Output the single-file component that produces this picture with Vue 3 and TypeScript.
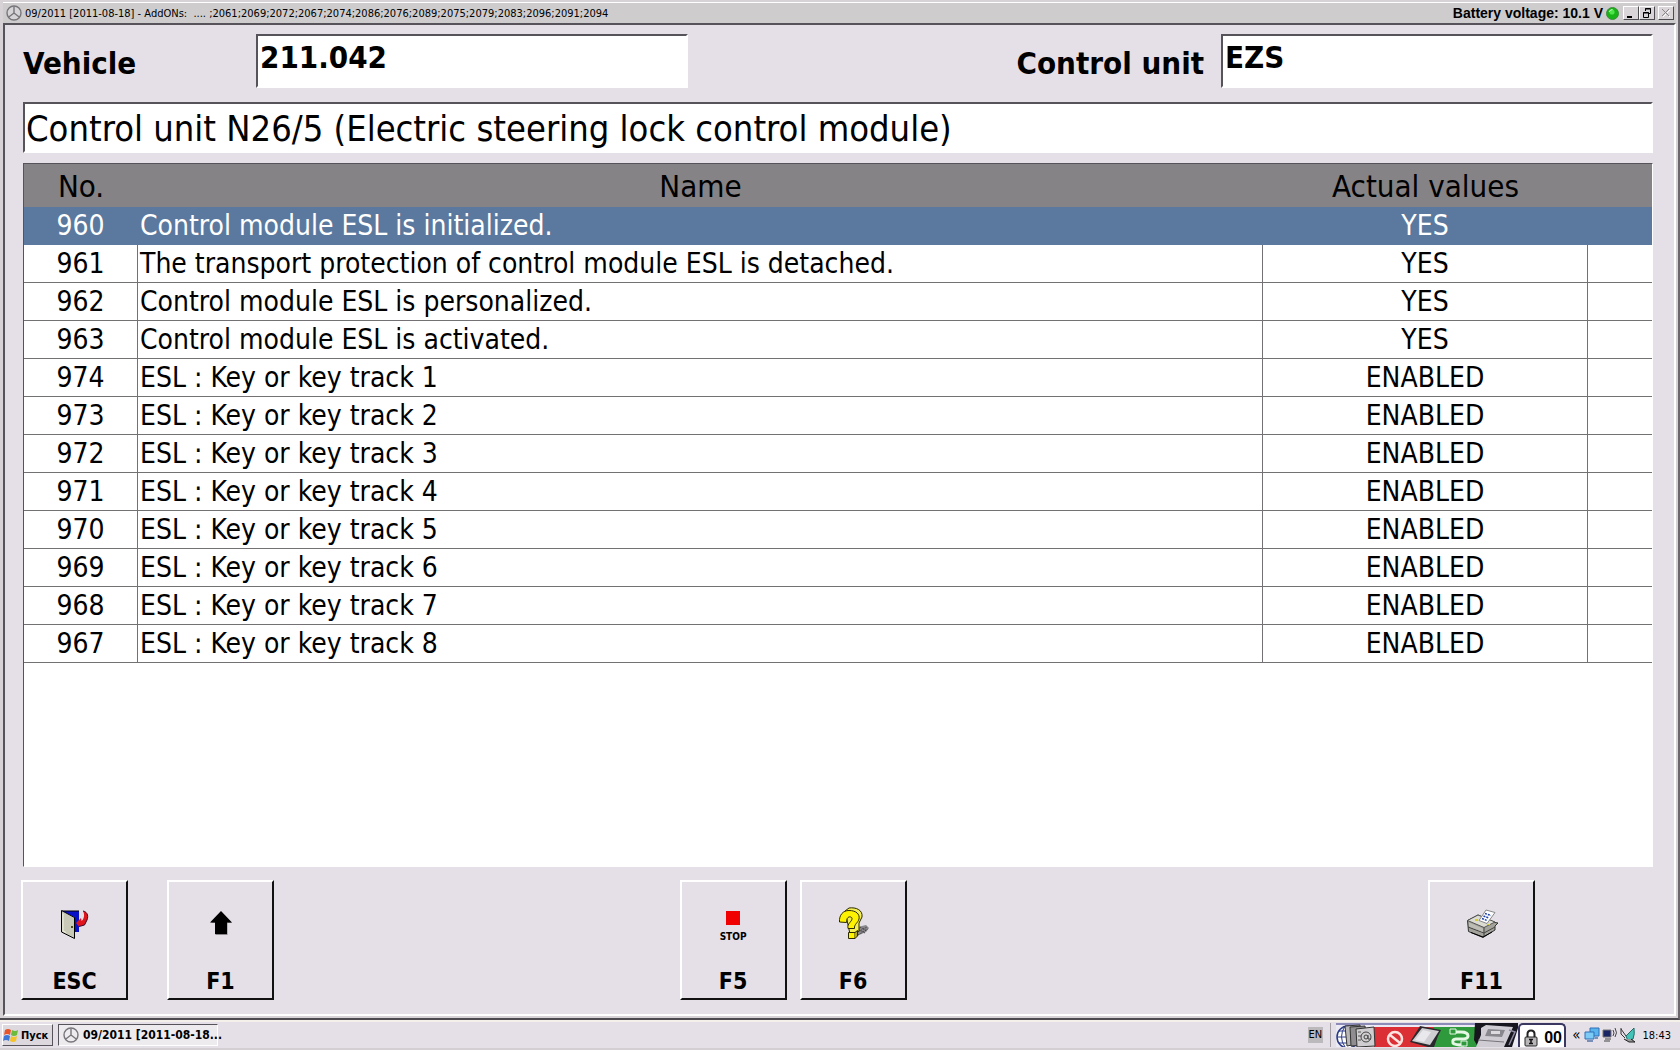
<script setup lang="ts">
import { ref } from 'vue'

interface Measurement {
  no: number
  name: string
  value: string
}

const vehicle = ref('211.042')
const controlUnit = ref('EZS')
const selected = ref(960)

const rows: Measurement[] = [
  { no: 960, name: 'Control module ESL is initialized.', value: 'YES' },
  { no: 961, name: 'The transport protection of control module ESL is detached.', value: 'YES' },
  { no: 962, name: 'Control module ESL is personalized.', value: 'YES' },
  { no: 963, name: 'Control module ESL is activated.', value: 'YES' },
  { no: 974, name: 'ESL : Key or key track 1', value: 'ENABLED' },
  { no: 973, name: 'ESL : Key or key track 2', value: 'ENABLED' },
  { no: 972, name: 'ESL : Key or key track 3', value: 'ENABLED' },
  { no: 971, name: 'ESL : Key or key track 4', value: 'ENABLED' },
  { no: 970, name: 'ESL : Key or key track 5', value: 'ENABLED' },
  { no: 969, name: 'ESL : Key or key track 6', value: 'ENABLED' },
  { no: 968, name: 'ESL : Key or key track 7', value: 'ENABLED' },
  { no: 967, name: 'ESL : Key or key track 8', value: 'ENABLED' },
]
</script>

<template>
  <div class="screen">
    <div class="window">
      <header class="titlebar">
        <svg class="star" viewBox="0 0 16 16" aria-hidden="true">
          <circle cx="8" cy="8" r="7" fill="#d6d4d6" stroke="#77757a" stroke-width="1.4" />
          <path d="M8 1.5 V8 L2.8 12 M8 8 L13.2 12" fill="none" stroke="#77757a" stroke-width="1.4" />
        </svg>
        <span class="caption">09/2011 [2011-08-18] - AddONs:&nbsp; .... ;2061;2069;2072;2067;2074;2086;2076;2089;2075;2079;2083;2096;2091;2094</span>
        <span class="battery">Battery voltage: 10.1 V</span>
        <svg class="led" viewBox="0 0 13 13" aria-hidden="true">
          <circle cx="6.5" cy="6.5" r="6" fill="#17b317" stroke="#3f8a3f" />
          <circle cx="6" cy="5" r="2.6" fill="#4fe34a" />
          <path d="M3 5 Q4 2.5 6.5 2.5" fill="none" stroke="#d5ffd0" />
        </svg>
        <div class="controls">
          <button type="button" aria-label="Minimize">
            <svg viewBox="0 0 12 12"><path d="M2 9 H7 V11 H2Z" fill="#000" /></svg>
          </button>
          <button type="button" aria-label="Restore">
            <svg viewBox="0 0 12 12">
              <path d="M4.5 4 V1.5 H9.5 V6.5 H7.5 M4 2 H10 M2.5 5.5 H7.5 V10.5 H2.5Z M2 6 H8" fill="none" stroke="#000" />
            </svg>
          </button>
          <button type="button" class="close" aria-label="Close" disabled>
            <svg viewBox="0 0 12 12">
              <path d="M3 3 L10 10 M10 3 L3 10" stroke="#fff" />
              <path d="M2 2 L9 9 M9 2 L2 9" stroke="#8a878b" />
            </svg>
          </button>
        </div>
      </header>

      <main class="panel">
        <div class="fields">
          <label class="vehicle-label" for="vehicle">Vehicle</label>
          <input id="vehicle" v-model="vehicle" type="text" readonly />
          <label class="unit-label" for="unit">Control unit</label>
          <input id="unit" v-model="controlUnit" type="text" readonly />
        </div>

        <h1>Control unit N26/5 (Electric steering lock control module)</h1>

        <div class="list">
          <table>
            <colgroup>
              <col class="c-no" />
              <col />
              <col class="c-value" />
              <col class="c-end" />
            </colgroup>
            <thead>
              <tr>
                <th scope="col">No.</th>
                <th scope="col">Name</th>
                <th scope="col">Actual values</th>
                <td></td>
              </tr>
            </thead>
            <tbody>
              <tr
                v-for="row in rows"
                :key="row.no"
                :class="{ selected: row.no === selected }"
                @click="selected = row.no"
              >
                <td>{{ row.no }}</td>
                <td class="name">{{ row.name }}</td>
                <td>{{ row.value }}</td>
                <td></td>
              </tr>
            </tbody>
          </table>
        </div>

        <nav class="keys">
          <button type="button" class="key">
            <svg viewBox="0 0 36 36" aria-hidden="true">
              <path d="M5 6 H22 V27 H17 V12 L5 6Z" fill="#0a12c8" />
              <path d="M5 6 H22" stroke="#000" />
              <path d="M4.5 5.5 V27 L17.500 33.500 V12.500 Z" fill="#c9c9b8" stroke="#000" />
              <path d="M6 8.500 V26 L9 27.500" fill="none" stroke="#f4f4e8" />
              <path d="M14 21 h2 v2 h-2z" fill="#4a4a10" />
              <path d="M26 6 C31 7 32 12 29 17 L27.500 20 L22 21.500 L19 18 L24 13 L24.500 16 C27 14 28 10 26 6Z" fill="#e0141c" />
              <path d="M26 6 C31 7 32 12 29 17 L27.500 20 L22 21.500" fill="none" stroke="#3a0a2a" />
            </svg>
            <span>ESC</span>
          </button>
          <button type="button" class="key f1">
            <svg viewBox="0 0 36 36" aria-hidden="true">
              <path d="M18.500 7 L29 18 H24.500 V30 H12.500 V18 H8 Z" fill="#8a878b" />
              <path d="M18 6 L29 17.500 H24 V29 H12 V17.500 H7 Z" fill="#000" />
            </svg>
            <span>F1</span>
          </button>
          <span class="gap-left"></span>
          <button type="button" class="key">
            <span class="stop"><i></i><small>STOP</small></span>
            <span>F5</span>
          </button>
          <button type="button" class="key f6">
            <svg viewBox="0 0 36 36" aria-hidden="true">
              <path d="M18 28 L23 22 L31 20 L34 23 L31 27 L22 31Z" fill="#8b888d" />
              <path d="M21 28 L32 22 M23 30 L33 24 M22 24 L30 28 M25 22 L32 26" stroke="#38363a" stroke-dasharray="1 1" />
              <path d="M10 6 L14 3 C21 2 28 5 27 12 L24 18 V26 L20 29 H15 Z" fill="#f4ee56" stroke="#2a2800" />
              <path d="M4.500 17 C4 10 8 5.500 14 5.500 C21 5.500 25 9 24 14 C23 18 19 19 19.500 23.500 H13 C12 18 17 17 17 13.500 C17 11.500 13 11 12 14 L11.500 17.500 Z" fill="#fff200" stroke="#2a2800" />
              <path d="M13.500 27.500 H20 V33.500 H13.500Z" fill="#fff200" stroke="#2a2800" />
              <path d="M20 27.500 L22.500 25.500 V31 L20 33.500" fill="#b3aa20" stroke="#2a2800" />
            </svg>
            <span>F6</span>
          </button>
          <span class="gap-right"></span>
          <button type="button" class="key">
            <svg viewBox="0 0 36 36" aria-hidden="true">
              <path d="M3.500 15.500 L14 10 L31 17.500 L34 18 L31 21 V25 L19 32.500 L4.500 26.500 Z" fill="#a3a39b" stroke="#333" />
              <path d="M3.500 15.500 L14 10 L31 17 L20 22.500Z" fill="#dddcd3" stroke="#555" />
              <path d="M20 22.500 V31 M4 22 L20 28 L31 22" fill="none" stroke="#444" />
              <path d="M5 17.500 L19 23.500 V27 L5 21.500Z" fill="#bebdb5" />
              <path d="M15 15.500 L22 5 L31 7.500 L23 18.500Z" fill="#fff" stroke="#888" />
              <path d="M21 8.500 L27 10.500 M19.500 11 L25 13 M18 13.500 L23 15.500" stroke="#1c3fa8" stroke-width="1.500" stroke-dasharray="2 1" />
              <path d="M11 14 h3 v2 h-3z M23 19 h3 v1 h-3z" fill="#d9cf2a" />
              <path d="M7 27.500 L19 32 L28 27" fill="none" stroke="#000" />
            </svg>
            <span>F11</span>
          </button>
        </nav>
      </main>
    </div>

    <footer class="taskbar">
      <button type="button" class="start">
        <svg viewBox="0 0 16 16" aria-hidden="true">
          <path d="M2 3 Q5 1 8 3 L7 8 Q4 6 1 8Z" fill="#e8552a" />
          <path d="M9 3 Q12 5 15 3 L14 8 Q11 10 8 8Z" fill="#6dbb3a" />
          <path d="M1 9 Q4 7 7 9 L6 14 Q3 12 0 14Z" fill="#3f77d8" />
          <path d="M8 9 Q11 11 14 9 L13 14 Q10 16 7 14Z" fill="#f5c227" />
        </svg>
        <span>Пуск</span>
      </button>
      <button type="button" class="task">
        <svg viewBox="0 0 16 16" aria-hidden="true">
          <circle cx="8" cy="8" r="7" fill="#eeecee" stroke="#77757a" stroke-width="1.400" />
          <path d="M8 1.500 V8 L2.800 12 M8 8 L13.200 12" fill="none" stroke="#77757a" stroke-width="1.400" />
        </svg>
        <span>09/2011 [2011-08-18...</span>
      </button>
      <span class="lang">EN</span>
      <div class="strip">
        <svg viewBox="0 0 182 24" aria-hidden="true">
          <rect width="182" height="24" fill="#eceaf2" />
          <path d="M0 0 H182 V2 H0Z" fill="#8d8bb8" />
          <rect x="38" y="4" width="62" height="20" fill="#dc2f35" />
          <rect x="98" y="4" width="46" height="20" fill="#2f9a3c" />
          <circle cx="12" cy="14" r="11" fill="#fff" stroke="#2b3a86" stroke-width="1.500" />
          <path d="M1 14 H12 M3 8 H12 M3 20 H12 M9 3 Q2 14 9 24" fill="none" stroke="#2b3a86" />
          <g stroke="#333" fill="#b9b7b8">
            <path d="M9 3 L24 2 L26 20 L11 23Z" />
            <path d="M14 4 L29 3 L31 22 L15 23Z" fill="#8f8d8f" />
            <path d="M20 6 L38 4 L39 23 L21 24Z" fill="#cfcdcf" />
          </g>
          <path d="M22 9 h3 M22 13 h3 M22 17 h3" stroke="#555" />
          <circle cx="30" cy="14" r="5" fill="none" stroke="#444" />
          <circle cx="30" cy="14" r="2" fill="none" stroke="#444" />
          <path d="M32 12 V16 H35" fill="none" stroke="#444" />
          <circle cx="59" cy="16" r="7" fill="none" stroke="#ffe3e0" stroke-width="2.500" />
          <path d="M54 12 L64 20" stroke="#ffe3e0" stroke-width="2.500" />
          <path d="M74 19 L84 3 L105 7 L102 13 L98 24 H92Z" fill="#2a282c" />
          <path d="M76 18 L86 5 L103 8 L94 22Z" fill="#cfced2" />
          <path d="M79 17 L87 7 L95 9 L88 19Z" fill="#e9e8ec" />
          <path d="M115 9 H125 Q132 9 132 13 Q132 16 125 16 H120 Q116 16 117 20 Q118 22 128 22" fill="none" stroke="#e4f7e2" stroke-width="3" />
          <path d="M114 6 h6 v5 h-6z M125 18 h6 v5 h-6z" fill="#2f9a3c" stroke="#e4f7e2" />
          <path d="M139 0 H182 V5 L176 24 H142 L138 17Z" fill="#17151d" />
          <path d="M145 5 L150 2 L177 4 L168 24 H140 L145 12Z" fill="#cfcdd3" />
          <path d="M152 6 L169 7 L166 14 L149 13Z" fill="#8a888f" />
          <path d="M155 8 h9 v3 h-9z" fill="#dcdadf" />
          <path d="M142 17 L168 19" stroke="#77757a" />
          <path d="M173 7 L179 9 L173 22" fill="none" stroke="#8b89a0" stroke-width="1.500" />
        </svg>
        <span class="lock">
          <svg viewBox="0 0 14 18" aria-hidden="true">
            <path d="M3.500 8 V5 Q3.500 1.500 7 1.500 Q10.500 1.500 10.500 5 V8" fill="none" stroke="#222" stroke-width="2" />
            <rect x="1" y="8" width="12" height="9" rx="1" fill="#b8b6b8" stroke="#222" />
            <path d="M5 10.500 H9 M7 10.500 V14.500 M5 14.500 H9" stroke="#111" stroke-width="1.500" />
          </svg>
          <b>00</b>
        </span>
      </div>
      <div class="tray">
        <span class="chevron">«</span>
        <svg viewBox="0 0 16 16" aria-hidden="true">
          <path d="M6 1 H15 V9 H6Z" fill="#59b4ee" stroke="#2f6fb5" />
          <path d="M1 5 H10 V12 H1Z" fill="#7ccaf6" stroke="#2f6fb5" />
          <path d="M3 14 H9 M11 11 H14" stroke="#7a8fb8" stroke-width="2" />
        </svg>
        <svg viewBox="0 0 16 16" aria-hidden="true">
          <path d="M1 3 H9 V10 H1Z" fill="#1a2566" stroke="#777" />
          <path d="M3 12 H9 M2 14 H8" stroke="#444" />
          <path d="M11 3 Q13 6 11 9 M13 1 Q16 6 13 10" fill="none" stroke="#444" />
        </svg>
        <svg viewBox="0 0 16 16" aria-hidden="true">
          <path d="M1 1 L1 7 L5 11 M1 2 L6 9" fill="none" stroke="#333" />
          <path d="M14 1 L6 9 L8 14 L13 12 Q15 7 14 1Z" fill="#45c2b8" stroke="#1c6b66" />
          <path d="M4 12 L9 15 H15 L11 12" fill="#999" stroke="#222" />
        </svg>
        <time>18:43</time>
      </div>
    </footer>
  </div>
</template>

<style>
body {
  margin: 0;
}
</style>

<style scoped>
.screen {
  display: flex;
  flex-direction: column;
  min-height: 100vh;
  background: #e5dfe7;
  color: #000;
  font-family: 'DejaVu Sans Condensed', 'DejaVu Sans', sans-serif;
}

button {
  font-family: inherit;
  color: inherit;
  padding: 0;
  border-radius: 0;
}

.window {
  flex: 1;
  display: flex;
  flex-direction: column;
  padding: 2px 2px 2px 3px;
  border-right: 2px solid #6a666c;
  border-bottom: 2px solid #4e4b50;
  background: #d6d2d6;
}

.titlebar {
  display: flex;
  align-items: center;
  height: 21px;
  padding: 0 2px 0 3px;
  border-top: 1px solid #fff;
  box-sizing: border-box;
  background: #cecccd;
}

.star {
  width: 16px;
  height: 16px;
  margin-right: 3px;
}

.caption {
  flex: 1;
  font-size: 11px;
  white-space: nowrap;
}

.battery {
  font: bold 14px 'Liberation Sans', sans-serif;
}

.led {
  width: 13px;
  height: 13px;
  margin: 0 4px 0 3px;
}

.controls {
  display: flex;
}

.controls button {
  width: 16px;
  height: 14px;
  border: 1px solid;
  border-color: #fff #4e4b50 #4e4b50 #fff;
  background: #d9d5d9;
  display: flex;
  align-items: center;
  justify-content: center;
}

.controls svg {
  width: 12px;
  height: 12px;
}

.controls .close {
  margin-left: 3px;
}

.panel {
  flex: 1;
  display: flex;
  flex-direction: column;
  border: 2px solid;
  border-color: #57535a #fff #fff #57535a;
  padding: 9px 21px 14px 18px;
  background: #e5dfe7;
}

.fields {
  display: flex;
  align-items: center;
  font-size: 31px;
  font-weight: bold;
}

.fields label {
  padding-top: 3px;
  line-height: 36px;
}

.vehicle-label {
  width: 233px;
}

.unit-label {
  margin-left: auto;
  margin-right: 17px;
}

.fields input {
  width: 26.5%;
  height: 54px;
  box-sizing: border-box;
  border: 2px solid;
  border-color: #57535a #fff #fff #57535a;
  border-radius: 0;
  margin: 0;
  padding: 0 2px 8px;
  outline: none;
  background: #fff;
  color: inherit;
  font: inherit;
}

h1 {
  margin: 14px 0 10px;
  height: 51px;
  line-height: 50px;
  box-sizing: border-box;
  padding-left: 1px;
  border: 2px solid;
  border-color: #57535a #fff #fff #57535a;
  background: #fff;
  font-size: 36px;
  font-weight: normal;
  white-space: nowrap;
}

.list {
  flex: 1;
  border: 1px solid;
  border-color: #57535a #fff #fff #57535a;
  background: #fff;
}

table {
  width: 100%;
  table-layout: fixed;
  border-collapse: separate;
  border-spacing: 0;
  font-size: 28px;
  text-align: center;
}

.c-no {
  width: 114px;
}

.c-value {
  width: 325px;
}

.c-end {
  width: 64px;
}

thead tr {
  height: 43px;
  background: #858385;
}

th {
  padding: 0;
  font-size: 31px;
  font-weight: normal;
  line-height: 42px;
}

tbody td {
  height: 38px;
  box-sizing: border-box;
  padding: 0;
  border-right: 1px solid #747174;
  border-bottom: 1px solid #747174;
  line-height: 36px;
  white-space: nowrap;
}

tbody td:last-child {
  border-right: 0;
}

tbody .name {
  padding-left: 2px;
  text-align: left;
}

.selected td {
  border-color: #5b799e;
  background: #5b799e;
  color: #fff;
}

.keys {
  display: flex;
  margin: 13px 0 0 -2px;
  padding-right: 118px;
}

.key {
  width: 107px;
  height: 120px;
  box-sizing: border-box;
  display: flex;
  flex-direction: column;
  align-items: center;
  justify-content: space-between;
  padding: 23px 0 2px;
  border: 2px solid;
  border-color: #fff #111 #111 #fff;
  background: #e5dfe7;
  font-size: 23px;
  font-weight: bold;
  line-height: 30px;
}

.key svg {
  width: 36px;
  height: 36px;
}

.f1 {
  margin-left: 39px;
}

.f6 {
  margin-left: 13px;
}

.gap-left {
  flex: 7;
}

.gap-right {
  flex: 9;
}

.stop {
  display: flex;
  flex-direction: column;
  align-items: center;
  gap: 7px;
  padding-top: 6px;
}

.stop i {
  width: 14px;
  height: 14px;
  background: #f00000;
}

.stop small {
  font-size: 10px;
  line-height: 10px;
}

.taskbar {
  display: flex;
  align-items: center;
  height: 30px;
  box-sizing: border-box;
  border-top: 2px solid #f5f0ea;
  border-bottom: 2px solid #d3cfd3;
  padding: 0 9px 0 2px;
  font-size: 11px;
}

.start,
.task {
  display: flex;
  align-items: center;
  height: 22px;
  box-sizing: border-box;
  border: 1px solid;
  font-size: 11px;
  font-weight: bold;
  white-space: nowrap;
}

.start {
  width: 51px;
  gap: 2px;
  border-color: #fff #57535a #57535a #fff;
  background: #dcd8dd;
}

.start svg,
.task svg {
  flex: none;
  width: 16px;
  height: 16px;
}

.task {
  width: 160px;
  margin-left: 5px;
  padding-left: 4px;
  gap: 4px;
  border-color: #57535a #fff #fff #57535a;
  background: #eeebef;
}

.task span {
  font-size: 12px;
}

.lang {
  margin-left: auto;
  padding: 0 1px;
  line-height: 16px;
  background: #bcb9bd;
}

.strip {
  display: flex;
  margin-left: 7px;
  padding-left: 5px;
  border-left: 1px solid #a29ea4;
}

.strip > svg {
  width: 182px;
  height: 24px;
}

.lock {
  display: flex;
  align-items: center;
  gap: 6px;
  width: 48px;
  height: 24px;
  box-sizing: border-box;
  padding: 3px 0 0 4px;
  border: 2px solid #3a3760;
  border-bottom: 0;
  border-radius: 5px 5px 0 0;
  background: #fff;
}

.lock svg {
  width: 14px;
  height: 18px;
}

.lock b {
  font: bold 16px 'Liberation Sans', sans-serif;
}

.tray {
  display: flex;
  align-items: center;
  gap: 2px;
  margin-left: 6px;
}

.tray svg {
  width: 16px;
  height: 16px;
}

.chevron {
  margin-right: 2px;
  font-size: 15px;
  line-height: 20px;
}

.tray time {
  margin-left: 4px;
}
</style>
